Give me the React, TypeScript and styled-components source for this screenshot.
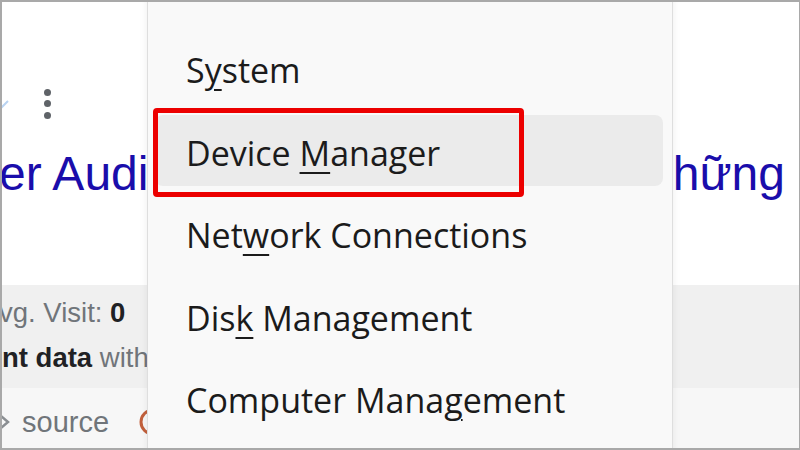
import React from "react";
import styled, { createGlobalStyle } from "styled-components";

const GlobalStyle = createGlobalStyle`
  html, body { margin: 0; padding: 0; background: #ffffff; }
  body { width: 800px; height: 450px; overflow: hidden; }
`;

const Frame = styled.div`
  position: relative;
  width: 800px;
  height: 450px;
  box-sizing: border-box;
  border: 2px solid #a9a9a9;
  border-right-width: 1px;
  overflow: hidden;
  background: #ffffff;
  font-family: "Liberation Sans", Arial, sans-serif;
`;

const Results = styled.div`
  display: flex;
  flex-direction: column;
  height: 100%;
`;

const ActionRow = styled.div`
  box-sizing: border-box;
  height: 122px;
  padding-top: 81px;
  display: flex;
  align-items: center;
  gap: 34px;
`;

const FaintChevron = styled.svg`
  margin-left: -8px;
  flex: none;
`;

const Kebab = styled.div`
  display: flex;
  flex-direction: column;
  gap: 4.5px;
`;

const Dot = styled.span`
  width: 7px;
  height: 7px;
  border-radius: 50%;
  background: #5f6368;
`;

const HeadingRow = styled.div`
  box-sizing: border-box;
  height: 161px;
  padding: 22px 14px 0 0;
  display: flex;
  justify-content: space-between;
  align-items: flex-start;
  font-size: 48px;
  line-height: 56px;
  color: #1a0dab;
  white-space: nowrap;
`;

const HeadingPart = styled.span<{ $lead?: boolean }>`
  margin-left: ${(p) => (p.$lead ? "-3px" : "0")};
`;

const Band = styled.div`
  box-sizing: border-box;
  height: 103px;
  padding-top: 5px;
  background: #f0f0f0;
  font-size: 27.5px;
  line-height: 45px;
  color: #70757a;
  white-space: nowrap;
`;

const BandLine = styled.div<{ $shift: number }>`
  margin-left: ${(p) => p.$shift}px;
`;

const Strong = styled.b`
  color: #202124;
  font-weight: 700;
`;

const SourceRow = styled.div`
  flex: 1;
  box-sizing: border-box;
  padding-top: 8px;
  background: #f7f7f7;
  display: flex;
  align-items: center;
  font-size: 29px;
  line-height: 34px;
  color: #70757a;
`;

const CodeIcon = styled.svg`
  margin-left: -6px;
  margin-right: 10px;
  flex: none;
`;

const FavRing = styled.svg`
  margin-left: 30px;
  flex: none;
`;

const Menu = styled.div`
  position: absolute;
  left: 145px;
  top: 30.5px;
  bottom: -20px;
  width: 526px;
  box-sizing: border-box;
  font-family: "Open Sans", "Noto Sans", sans-serif;
  display: flex;
  flex-direction: column;
  gap: 11.5px;
  &::before {
    content: "";
    position: absolute;
    left: 0;
    right: 0;
    top: -60px;
    bottom: 0;
    box-sizing: border-box;
    background: #f9f9f9;
    border-left: 1px solid #dedede;
    border-right: 1px solid #dedede;
    box-shadow: 0 0 8px rgba(0, 0, 0, 0.07);
    z-index: 0;
  }
`;

const Item = styled.div<{ $active?: boolean }>`
  position: relative;
  z-index: 1;
  height: 71px;
  flex: none;
  box-sizing: border-box;
  margin: 0 10px 0 8px;
  padding: 4px 0 0 31px;
  display: flex;
  align-items: center;
  border-radius: 8px;
  background: ${(p) => (p.$active ? "#ebebeb" : "transparent")};
  font-size: 34px;
  color: #1b1b1b;
  white-space: nowrap;
`;

const Label = styled.span`
  white-space: pre;
`;

const Key = styled.span`
  text-decoration: underline;
  text-decoration-thickness: 2px;
  text-underline-offset: 6px;
`;

const Annotation = styled.div`
  position: absolute;
  left: -2px;
  top: -7px;
  width: 371px;
  height: 89px;
  box-sizing: border-box;
  border: 5px solid #ec0000;
  border-radius: 4px;
  pointer-events: none;
`;

type Entry = { before: string; key: string; after: string; active?: boolean };

const entries: Entry[] = [
  { before: "S", key: "y", after: "stem" },
  { before: "Device ", key: "M", after: "anager", active: true },
  { before: "Net", key: "w", after: "ork Connections" },
  { before: "Dis", key: "k", after: " Management" },
  { before: "Computer Mana", key: "g", after: "ement" },
];

export default function App() {
  return (
    <>
      <GlobalStyle />
      <Frame>
        <Results>
          <ActionRow>
            <FaintChevron width="16" height="12" viewBox="0 0 16 12">
              <path d="M2 3 L8 9 L14 3" fill="none" stroke="#b9d3f2" strokeWidth="2" />
            </FaintChevron>
            <Kebab>
              <Dot />
              <Dot />
              <Dot />
            </Kebab>
          </ActionRow>
          <HeadingRow>
            <HeadingPart $lead>er Audio</HeadingPart>
            <HeadingPart>hững</HeadingPart>
          </HeadingRow>
          <Band>
            <BandLine $shift={-3}>
              vg. Visit: <Strong>0</Strong>
            </BandLine>
            <BandLine $shift={0}>
              <Strong>nt data</Strong> with
            </BandLine>
          </Band>
          <SourceRow>
            <CodeIcon width="16" height="20" viewBox="0 0 16 20">
              <path d="M5 4 L12 10 L5 16" fill="none" stroke="#8a8e92" strokeWidth="2.5" />
            </CodeIcon>
            <span>source</span>
            <FavRing width="28" height="28" viewBox="0 0 28 28">
              <circle cx="14" cy="14" r="12" fill="none" stroke="#c2603c" strokeWidth="3" />
            </FavRing>
          </SourceRow>
        </Results>
        <Menu>
          {entries.map((e) => (
            <Item key={e.before + e.key + e.after} $active={e.active}>
              <Label>
                {e.before}
                <Key>{e.key}</Key>
                {e.after}
              </Label>
              {e.active && <Annotation />}
            </Item>
          ))}
        </Menu>
      </Frame>
    </>
  );
}
